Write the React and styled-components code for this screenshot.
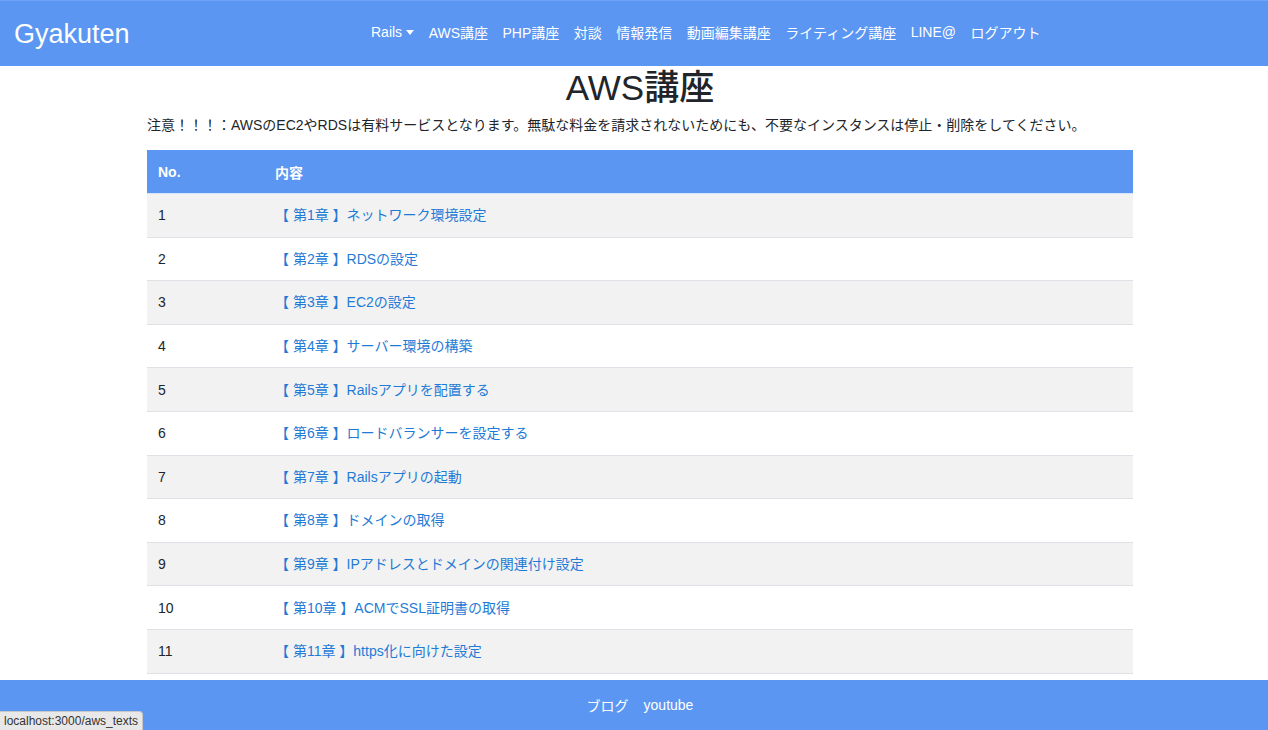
import React from "react";
import styled, { createGlobalStyle } from "styled-components";

const chapters = [
  "【 第1章 】ネットワーク環境設定",
  "【 第2章 】RDSの設定",
  "【 第3章 】EC2の設定",
  "【 第4章 】サーバー環境の構築",
  "【 第5章 】Railsアプリを配置する",
  "【 第6章 】ロードバランサーを設定する",
  "【 第7章 】Railsアプリの起動",
  "【 第8章 】ドメインの取得",
  "【 第9章 】IPアドレスとドメインの関連付け設定",
  "【 第10章 】ACMでSSL証明書の取得",
  "【 第11章 】https化に向けた設定",
];

const navLinks = ["AWS講座", "PHP講座", "対談", "情報発信", "動画編集講座", "ライティング講座", "LINE@", "ログアウト"];

const App = () => {
  return (
    <>
      <GlobalStyle />
      <Header>
        <Brand href="#">Gyakuten</Brand>
        <Nav>
          <NavLink href="#">
            Rails<Caret />
          </NavLink>
          {navLinks.map((l) => (
            <NavLink href="#" key={l}>{l}</NavLink>
          ))}
        </Nav>
      </Header>
      <Main>
        <Title>AWS講座</Title>
        <Notice>
          注意！！！：AWSのEC2やRDSは有料サービスとなります。無駄な料金を請求されないためにも、不要なインスタンスは停止・削除をしてください。
        </Notice>
        <Table>
          <thead>
            <tr>
              <Th $narrow>No.</Th>
              <Th>内容</Th>
            </tr>
          </thead>
          <tbody>
            {chapters.map((c, i) => (
              <Row key={i} $striped={i % 2 === 0}>
                <Td>{i + 1}</Td>
                <Td>
                  <ChapterLink href="#">{c}</ChapterLink>
                </Td>
              </Row>
            ))}
          </tbody>
        </Table>
      </Main>
      <Footer>
        <FooterLink href="#">ブログ</FooterLink>
        <FooterLink href="#">youtube</FooterLink>
      </Footer>
      <StatusBar>localhost:3000/aws_texts</StatusBar>
    </>
  );
};
export default App;

const GlobalStyle = createGlobalStyle`
body{
  margin:0;
  font-family:"Liberation Sans", "Noto Sans CJK JP", sans-serif;
  color:#212529;
  background:#fff;
}
a{
  text-decoration:none;
}
`

const Header = styled.header`
height:66px;
background:#5b96f2;
border-top:1px solid #6fa4f5;
box-sizing:border-box;
display:flex;
align-items:center;
padding:0 14px;
`

const Brand = styled.a`
color:#fff;
font-size:27px;
width:357px;
margin-top:1px;
`

const Nav = styled.nav`
display:flex;
align-items:center;
gap:14.5px;
margin-top:-3px;
`

const NavLink = styled.a`
color:#fff;
font-size:14px;
display:flex;
align-items:center;
`

const Caret = styled.span`
display:inline-block;
margin-left:4px;
border-top:5px solid #fff;
border-left:4.5px solid transparent;
border-right:4.5px solid transparent;
`

const Main = styled.main`
width:986px;
margin-left:147px;
`

const Title = styled.h1`
margin:0;
text-align:center;
font-size:35px;
font-weight:500;
line-height:44px;
height:44px;
`

const Notice = styled.p`
margin:5px 0 0;
font-size:14px;
line-height:20px;
`

const Table = styled.table`
width:100%;
border-collapse:collapse;
margin-top:15px;
font-size:14px;
`

const Th = styled.th`
background:#5b96f2;
color:#fff;
text-align:left;
font-weight:bold;
height:43px;
width:${(p) => (p.$narrow ? "95px" : "auto")};
padding:0 11px;
border-bottom:1px solid #d6e4fb;
`

const Row = styled.tr`
background:${(p) => (p.$striped ? "#f2f2f2" : "#fff")};
border-bottom:1px solid #dee2e6;
`

const Td = styled.td`
height:43.6px;
padding:0 11px;
box-sizing:border-box;
line-height:20px;
`

const ChapterLink = styled.a`
color:#1f7bd6;
`

const Footer = styled.footer`
margin-top:6px;
height:50px;
background:#5b96f2;
display:flex;
justify-content:center;
align-items:center;
gap:15px;
padding-left:12px;
`

const FooterLink = styled.a`
color:#fff;
font-size:14px;
`

const StatusBar = styled.div`
position:fixed;
left:0;
bottom:0;
height:18px;
padding:0 4px;
background:#e8e8e8;
border:1px solid #c8c8c8;
border-left:none;
border-bottom:none;
border-top-right-radius:4px;
font-size:12px;
line-height:18px;
color:#333;
`
